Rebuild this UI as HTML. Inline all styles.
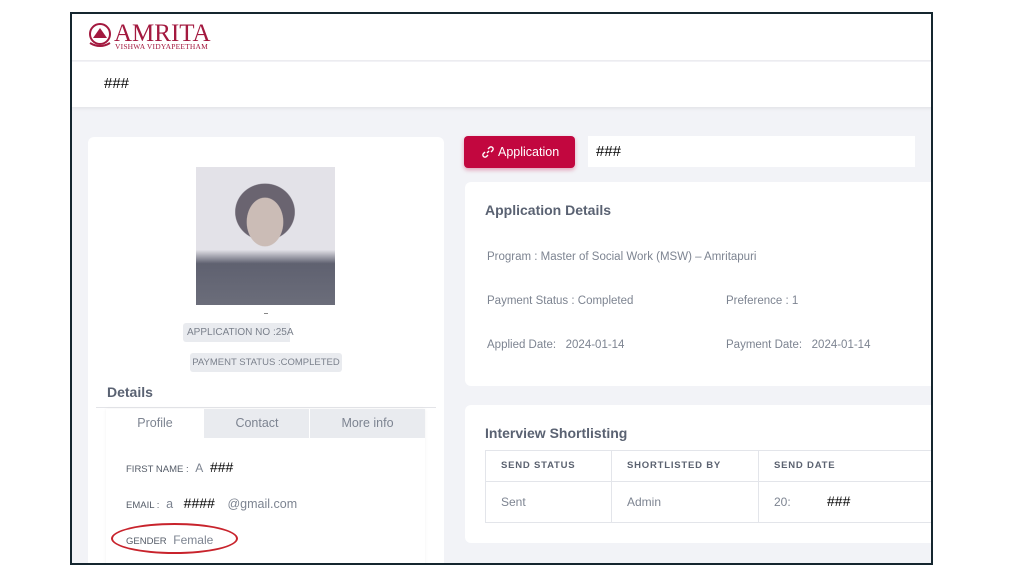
<!DOCTYPE html>
<html><head><meta charset="utf-8"><style>
*{margin:0;padding:0;box-sizing:border-box}
body{width:1024px;height:576px;background:#fff;position:relative;overflow:hidden;font-family:"Liberation Sans",sans-serif}
.frame{position:absolute;left:70px;top:12px;width:863px;height:553px;border:2px solid #15262f;background:#f2f3f7;overflow:hidden}
.abs{position:absolute}
.hdr{left:0;top:0;width:861px;height:47px;background:#fff;border-bottom:1px solid #ececf0}
.bar{left:0;top:48px;width:861px;height:45px;background:#fff;box-shadow:0 2px 3px rgba(0,0,0,.06)}
.card{background:#fff;border-radius:6px}
.g{color:#7d8491}
.pill{background:#e9ebef;color:#7b818c;font-size:10px;border-radius:3px;text-align:center;line-height:19px;white-space:nowrap}
.t{font-weight:bold;color:#5a6272;font-size:14px}
</style></head><body>
<div class="frame">
<div class="abs hdr">
 <svg class="abs" style="left:16px;top:8px" width="26" height="28" viewBox="0 0 26 28"><circle cx="12" cy="12" r="10" fill="none" stroke="#a3193f" stroke-width="2"/><path d="M5 16 L12 6 L19 16 Z" fill="#a3193f"/><path d="M2 21 Q12 27 22 21" stroke="#a3193f" stroke-width="2" fill="none"/></svg>
 <div class="abs" style="left:42px;top:7px;font-family:'Liberation Serif',serif;font-size:25px;color:#a3193f;line-height:25px">AMRITA</div>
 <div class="abs" style="left:43px;top:28px;font-family:'Liberation Serif',serif;font-size:7.5px;color:#a3193f;letter-spacing:.2px">VISHWA VIDYAPEETHAM</div>
</div>
<div class="abs bar"><div class="abs" style="left:32px;top:13px;font-size:15px;color:#000">###</div></div>

<div class="abs card" style="left:16px;top:123px;width:356px;height:440px">
 <div class="abs" style="left:108px;top:30px;width:139px;height:138px;background:radial-gradient(ellipse 30px 40px at 69px 55px,#cbbcb6 60%,transparent 62%),radial-gradient(ellipse 42px 40px at 69px 45px,#6a6470 70%,transparent 72%),linear-gradient(#e3e2e8 60%,#5f6170 70%,#6b6d7a);"></div>
 <div class="abs" style="left:176px;top:176px;width:4px;height:1px;background:#888"></div>
 <div class="abs pill" style="left:95px;top:186px;width:167px;background:linear-gradient(90deg,#e9ebef 64%,#fff 64%);text-align:left;padding-left:4px">APPLICATION NO :25A</div>
 <div class="abs pill" style="left:102px;top:216px;width:152px;font-size:9.5px">PAYMENT STATUS :COMPLETED</div>
 <div class="abs t" style="left:19px;top:247px">Details</div>
 <div class="abs" style="left:8px;top:270px;width:340px;height:1px;background:#e3e4e8"></div>
 <div class="abs" style="left:18px;top:272px;width:319px;height:170px;background:#fff;box-shadow:0 0 3px rgba(0,0,0,.06)"></div>
 <div class="abs" style="left:18px;top:272px;width:319px;height:29px;background:#e9ebef"></div>
 <div class="abs g" style="left:18px;top:272px;width:98px;height:29px;background:#fff;text-align:center;line-height:29px;font-size:12.5px">Profile</div>
 <div class="abs g" style="left:117px;top:272px;width:104px;text-align:center;line-height:29px;font-size:12.5px">Contact</div>
 <div class="abs" style="left:221px;top:272px;width:1px;height:29px;background:#fff"></div>
 <div class="abs g" style="left:222px;top:272px;width:115px;text-align:center;line-height:29px;font-size:12.5px">More info</div>
 <div class="abs" style="left:38px;top:322px;font-size:9.5px;color:#555c68">FIRST NAME : <span class="g" style="font-size:12px;margin-left:4px">A</span> <span style="color:#000;font-size:14px;margin-left:4px">###</span></div>
 <div class="abs" style="left:38px;top:358px;font-size:9.5px;color:#555c68">EMAIL : <span class="g" style="font-size:12.5px;margin-left:4px">a</span> <span style="color:#000;font-size:14px;margin-left:8px">####</span> <span class="g" style="font-size:12.5px;margin-left:10px">@gmail.com</span></div>
 <div class="abs" style="left:38px;top:396px;font-size:9.5px;color:#555c68">GENDER <span class="g" style="font-size:12px;margin-left:4px">Female</span></div>
 <div class="abs" style="left:23px;top:386px;width:127px;height:31px;border:2px solid #c8232c;border-radius:50%"></div>
</div>

<div class="abs" style="left:392px;top:122px;width:111px;height:32px;background:#c2073f;border-radius:4px;box-shadow:0 2px 4px rgba(194,7,63,.35);color:#fff;font-size:12.5px;line-height:32px;padding-left:34px">Application
 <svg class="abs" style="left:18px;top:10px" width="12" height="12" viewBox="0 0 12 12" fill="none" stroke="#fff" stroke-width="1.4"><path d="M5 7 L7 5"/><path d="M6 3 L7.5 1.5 a2 2 0 0 1 3 3 L9 6"/><path d="M6 9 L4.5 10.5 a2 2 0 0 1 -3 -3 L3 6"/></svg></div>
<div class="abs" style="left:516px;top:122px;width:327px;height:31px;background:#fff;font-size:15px;line-height:31px;padding-left:8px">###</div>

<div class="abs card" style="left:393px;top:168px;width:480px;height:204px">
 <div class="abs t" style="left:20px;top:20px">Application Details</div>
 <div class="abs g" style="left:22px;top:69px;font-size:11.5px">Program : Master of Social Work (MSW) – Amritapuri</div>
 <div class="abs g" style="left:22px;top:113px;font-size:11.5px">Payment Status : Completed</div>
 <div class="abs g" style="left:261px;top:113px;font-size:11.5px">Preference : 1</div>
 <div class="abs g" style="left:22px;top:157px;font-size:11.5px">Applied Date: &nbsp; 2024-01-14</div>
 <div class="abs g" style="left:261px;top:157px;font-size:11.5px">Payment Date: &nbsp; 2024-01-14</div>
</div>

<div class="abs card" style="left:393px;top:391px;width:480px;height:138px">
 <div class="abs t" style="left:20px;top:20px">Interview Shortlisting</div>
 <div class="abs" style="left:20px;top:45px;width:470px;height:73px;border:1px solid #e3e5ea"></div>
 <div class="abs" style="left:20px;top:76px;width:470px;height:1px;background:#e3e5ea"></div>
 <div class="abs" style="left:146px;top:45px;width:1px;height:73px;background:#e3e5ea"></div>
 <div class="abs" style="left:293px;top:45px;width:1px;height:73px;background:#e3e5ea"></div>
 <div class="abs" style="left:36px;top:55px;font-size:9.5px;color:#5b6270;letter-spacing:.8px;font-weight:bold">SEND STATUS</div>
 <div class="abs" style="left:162px;top:55px;font-size:9.5px;color:#5b6270;letter-spacing:.8px;font-weight:bold">SHORTLISTED BY</div>
 <div class="abs" style="left:309px;top:55px;font-size:9.5px;color:#5b6270;letter-spacing:.8px;font-weight:bold">SEND DATE</div>
 <div class="abs g" style="left:36px;top:90px;font-size:12px">Sent</div>
 <div class="abs g" style="left:162px;top:90px;font-size:12px">Admin</div>
 <div class="abs g" style="left:309px;top:90px;font-size:12px">20:</div>
 <div class="abs" style="left:362px;top:88px;font-size:14px;color:#000">###</div>
</div>
</div>
</body></html>
